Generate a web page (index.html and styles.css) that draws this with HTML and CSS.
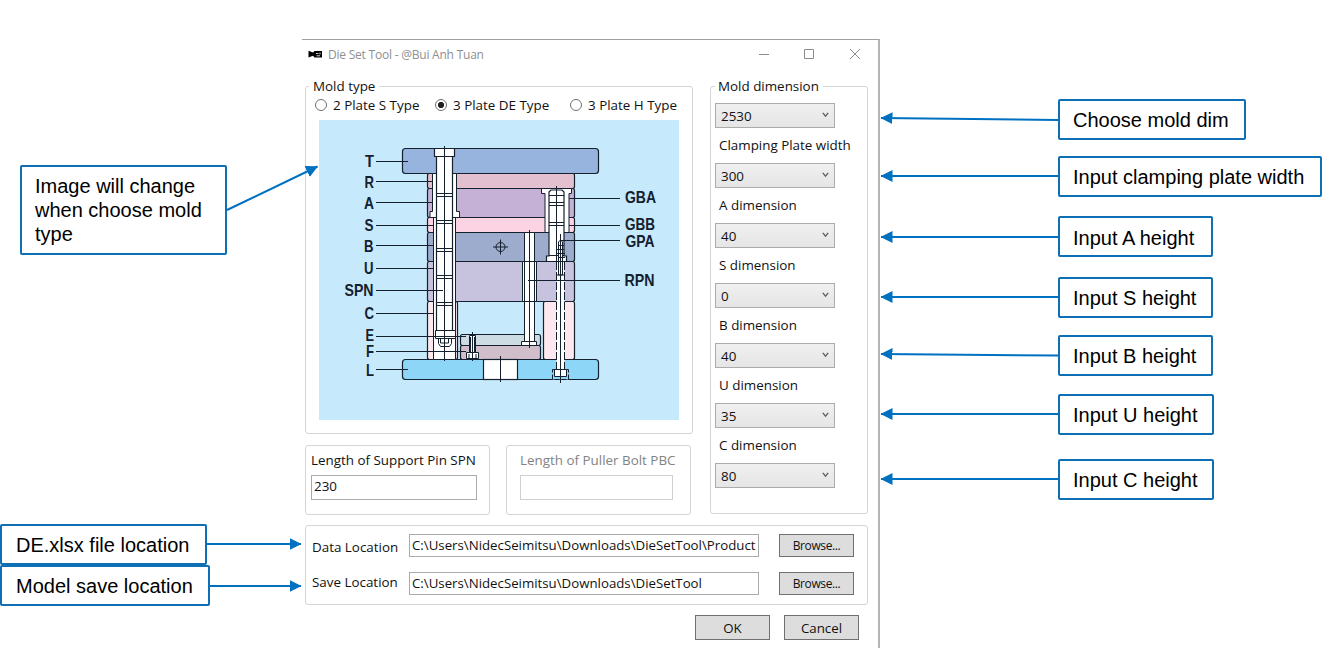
FILE: index.html
```html
<!DOCTYPE html>
<html lang="en">
<head>
<meta charset="utf-8">
<title>Die Set Tool</title>
<link rel="stylesheet" href="styles.css">
</head>
<body>
<main class="slide">
  <aside class="notes notes-left">
    <p class="note note-image">Image will change when choose mold type</p>
    <p class="note note-data">DE.xlsx file location</p>
    <p class="note note-save">Model save location</p>
  </aside>

  <section class="window">
    <header class="titlebar">
      <svg class="app-icon" width="14" height="9" viewBox="0 0 14 9"><path d="M.5.700L5 2.500l1.500-1.500H14v6.500H6.500L5 5.800.5 7.600z" fill="#000"/><path d="M8 3.500h2.500M8.500 5.800h3.500M12 2.500v2" stroke="#fff" fill="none" stroke-width=".8"/></svg>
      <h1 class="title">Die Set Tool - @Bui Anh Tuan</h1>
      <svg class="controls" width="102" height="12" viewBox="0 0 102 12" fill="none" stroke="#8c8c8c"><path d="M0 6.500h10M45.500 1.500h9v9h-9zM91 1l10 10M101 1L91 11"/></svg>
    </header>

    <div class="upper">
      <div class="left-col">
        <div class="group mold-type">
          <h2 class="legend">Mold type</h2>
          <div class="radios">
            <label class="radio r1"><i class="dot"></i><span>2 Plate S Type</span></label>
            <label class="radio r2"><i class="dot on"></i><span>3 Plate DE Type</span></label>
            <label class="radio r3"><i class="dot"></i><span>3 Plate H Type</span></label>
          </div>
          <svg class="diagram" width="360" height="300" viewBox="319 120 360 300">
            <rect x="319" y="120" width="360" height="300" fill="#c7e9fc"/>
            <g stroke="#14202e" stroke-width="1.2">
              <rect x="402.500" y="148.500" width="196" height="25" rx="3" fill="#96b4de"/>
              <rect x="427.500" y="173.500" width="147" height="15" rx="2" fill="#e2c0cf"/>
              <rect x="427.500" y="188.500" width="147" height="29" rx="2" fill="#c5b0d6"/>
              <rect x="427.500" y="217.500" width="147" height="15" rx="2" fill="#fbd3e2"/>
              <rect x="427.500" y="232.500" width="147" height="29" rx="2" fill="#9dabcd"/>
              <rect x="427.500" y="261.500" width="147" height="40" rx="2" fill="#c7c3df"/>
              <rect x="427.500" y="301.500" width="30" height="58" rx="2" fill="#fde8f0"/>
              <rect x="543.500" y="301.500" width="31" height="58" rx="2" fill="#fde8f0"/>
              <rect x="460.500" y="334.500" width="80" height="11" rx="2" fill="#cddbe3"/>
              <rect x="460.500" y="345.500" width="80" height="14" rx="2" fill="#d0bfca"/>
              <rect x="402.500" y="359.500" width="196" height="20" rx="3" fill="#8dd6f7"/>
              <rect x="483.500" y="359.500" width="34" height="20" fill="#fff"/>
            </g>
            <!-- support pin -->
            <g stroke="#14202e" fill="#fff">
              <path d="M433.500 217.500h22v142h-22z"/>
              <path d="M432.500 173.500h24v38h3v6h-29.500v-6h2.500z"/>
              <path d="M434.500 148.500h20v8h-2v174h-16v-174h-2z" stroke-width="1.200"/>
              <path d="M434.500 156.500h20M437 193.500h15M437 196.500h15M437 220.500h15M437 223.500h15M437 248.500h15M437 251.500h15M437 275.500h15M437 278.500h15M437 302.500h15M437 305.500h15"/>
              <path d="M438.500 338.500h13v5l-2 3h-9l-2-3zM435.500 330.500h20v8h-20zM440.500 339v4h8v-4"/>
              <path d="M457.500 301v58M444.500 146v215"/>
            </g>
            <!-- guide pin and bush -->
            <g stroke="#14202e" fill="#fff">
              <path d="M541.500 188.500h30v5h-2.500v39h-24v-39h-3.500z"/>
              <path d="M549 192l2-2h11l2 2v64h2.500v5.500h-20v-5.500h2.500z" stroke-width="1.200"/>
              <path d="M549 195.500h15M549 202.500h15M549 205.500h15M549 222.500h15M549 225.500h15M549 255.500h15"/>
              <path d="M556.500 262h8v108h-8z" stroke="none"/>
              <path d="M558.500 242l2-2 2 2v33h-4zM558 245.500h6M557 249.500h7M557 253.500h8M558 257.500h7M558 261.500h7"/>
              <path d="M556.500 262v108M564.500 262v108" stroke-dasharray="8 2"/>
              <path d="M552.500 369.500h16v10h-16z" fill="#8dd6f7" stroke-dasharray="5 2"/>
              <path d="M554.500 369.500h12v7h-12zM556.500 275h8M556.500 376.500h8M560.500 234v149M556.500 186v75"/>
            </g>
            <!-- return pin and ejector bolt -->
            <g stroke="#14202e" fill="#fff">
              <path d="M522.500 261.500h14v40h-14zM524.500 232.500h10v109h-10z"/>
              <path d="M521.500 341.500h15v4h-15zM529.500 230v118"/>
              <path d="M469.500 335.500h6v17h-6zM466.500 352.500h12v6h-12zM470.500 337v15M474.500 337v15M472.500 332v29M469 354v4M476 354v4M500.500 356v26"/>
            </g>
            <g stroke="#14202e" fill="none"><circle cx="500.500" cy="247" r="4.500"/><path d="M493 247h15M500.500 239.500v15"/></g>
            <path stroke="#14202e" fill="none" d="M376 161.500h32M376 181.500h57M376 202.500h57M376 225.500h57M376 245.500h57M376 268.500h57M376 290.500h67M376 313.500h57M376 336.500h90M376 351.500h90M376 369.500h32M569 198.500h51M569 225.500h51M561 240.500h59M528 280.500h92"/>
            <g class="part">
              <text x="365" y="167" textLength="9" lengthAdjust="spacingAndGlyphs">T</text>
              <text x="364.500" y="188" textLength="9.500" lengthAdjust="spacingAndGlyphs">R</text>
              <text x="364" y="209" textLength="10" lengthAdjust="spacingAndGlyphs">A</text>
              <text x="364.500" y="231" textLength="9" lengthAdjust="spacingAndGlyphs">S</text>
              <text x="364" y="252" textLength="9.500" lengthAdjust="spacingAndGlyphs">B</text>
              <text x="364" y="274" textLength="9.500" lengthAdjust="spacingAndGlyphs">U</text>
              <text x="344.500" y="296" textLength="29" lengthAdjust="spacingAndGlyphs">SPN</text>
              <text x="364.500" y="319" textLength="9.500" lengthAdjust="spacingAndGlyphs">C</text>
              <text x="365.500" y="341" textLength="8.500" lengthAdjust="spacingAndGlyphs">E</text>
              <text x="366" y="357" textLength="8" lengthAdjust="spacingAndGlyphs">F</text>
              <text x="366" y="376" textLength="8" lengthAdjust="spacingAndGlyphs">L</text>
              <text x="625" y="203" textLength="31" lengthAdjust="spacingAndGlyphs">GBA</text>
              <text x="625" y="230" textLength="30" lengthAdjust="spacingAndGlyphs">GBB</text>
              <text x="625.500" y="247" textLength="29" lengthAdjust="spacingAndGlyphs">GPA</text>
              <text x="624.500" y="286" textLength="30" lengthAdjust="spacingAndGlyphs">RPN</text>
            </g>
          </svg>
        </div>
        <div class="bolts">
          <div class="group bolt"><label>Length of Support Pin SPN</label><div class="box spn">230</div></div>
          <div class="group bolt off"><label>Length of Puller Bolt PBC</label><div class="box"></div></div>
        </div>
      </div>

      <div class="group dims">
        <h2 class="legend">Mold dimension</h2>
        <div class="combo">2530<svg width="7" height="6" viewBox="0 0 7 6"><path d="M.8.800l2.700 3.400L6.200.800"/></svg></div>
        <label>Clamping Plate width</label>
        <div class="combo">300<svg width="7" height="6" viewBox="0 0 7 6"><path d="M.8.800l2.700 3.400L6.200.800"/></svg></div>
        <label>A dimension</label>
        <div class="combo">40<svg width="7" height="6" viewBox="0 0 7 6"><path d="M.8.800l2.700 3.400L6.200.800"/></svg></div>
        <label>S dimension</label>
        <div class="combo">0<svg width="7" height="6" viewBox="0 0 7 6"><path d="M.8.800l2.700 3.400L6.200.800"/></svg></div>
        <label>B dimension</label>
        <div class="combo">40<svg width="7" height="6" viewBox="0 0 7 6"><path d="M.8.800l2.700 3.400L6.200.800"/></svg></div>
        <label>U dimension</label>
        <div class="combo">35<svg width="7" height="6" viewBox="0 0 7 6"><path d="M.8.800l2.700 3.400L6.200.800"/></svg></div>
        <label>C dimension</label>
        <div class="combo">80<svg width="7" height="6" viewBox="0 0 7 6"><path d="M.8.800l2.700 3.400L6.200.800"/></svg></div>
      </div>
    </div>

    <div class="group places">
      <label class="data-label">Data Location</label><div class="box path">C:\Users\NidecSeimitsu\Downloads\DieSetTool\Product</div><button class="btn browse">Browse...</button>
      <label>Save Location</label><div class="box path">C:\Users\NidecSeimitsu\Downloads\DieSetTool</div><button class="btn browse">Browse...</button>
    </div>
    <footer class="actions"><button class="btn">OK</button><button class="btn">Cancel</button></footer>
  </section>

  <aside class="notes notes-right">
    <p class="note n-mold">Choose mold dim</p>
    <p class="note n-clamp">Input clamping plate width</p>
    <p class="note n-a">Input A height</p>
    <p class="note n-s">Input S height</p>
    <p class="note n-b">Input B height</p>
    <p class="note n-u">Input U height</p>
    <p class="note n-c">Input C height</p>
  </aside>

  <svg class="arrows" width="1326" height="661" viewBox="0 0 1326 661">
    <defs><marker id="head" markerUnits="userSpaceOnUse" markerWidth="12" markerHeight="12" refX="11.500" refY="6" orient="auto"><path d="M0 0l12 6-12 6z" fill="#0070c0"/></marker></defs>
    <g stroke="#0070c0" stroke-width="2">
      <path marker-end="url(#head)" d="M227 210L317.500 166.500"/>
      <path marker-end="url(#head)" d="M207 544H301"/>
      <path marker-end="url(#head)" d="M210 586H301"/>
      <path marker-end="url(#head)" d="M1058 120L881 118"/>
      <path marker-end="url(#head)" d="M1058 176H881"/>
      <path marker-end="url(#head)" d="M1058 237H881"/>
      <path marker-end="url(#head)" d="M1058 297H881"/>
      <path marker-end="url(#head)" d="M1058 355.500L881 354"/>
      <path marker-end="url(#head)" d="M1058 414H881"/>
      <path marker-end="url(#head)" d="M1058 479H881"/>
    </g>
  </svg>
</main>
</body>
</html>
```

FILE: styles.css
```css
* { box-sizing: border-box; }
body { margin: 0; background: #fff; color: #111; font: 13.4px/18px "Open Sans", "Noto Sans", sans-serif; overflow: hidden; }
h1, h2, p { margin: 0; font-weight: normal; }
.slide { position: relative; display: grid; grid-template-columns: 302px 578px 446px; width: 1326px; height: 661px; }

/* callout boxes */
.notes { display: flex; flex-direction: column; align-items: flex-start; }
.note { height: 41px; border: 2px solid #0f6fb5; border-radius: 2px; padding: 7px 13px; background: #fff; color: #000; font: 20px/24px "Liberation Sans", Arial, sans-serif; white-space: nowrap; }
.note-image { width: 207px; height: 90px; margin: 165px 0 269px 20px; white-space: normal; }
.note-data { width: 207px; padding-left: 14px; }
.note-save { width: 210px; padding-left: 14px; }
.notes-right { padding: 99px 0 0 178px; }
.n-mold { width: 188px; }
.n-clamp { width: 264px; margin-top: 16px; }
.n-a { width: 155px; margin-top: 19px; padding-top: 8px; }
.n-s { width: 155px; margin-top: 20px; }
.n-b { width: 155px; margin-top: 17px; }
.n-u { width: 156px; margin-top: 18px; }
.n-c { width: 156px; margin-top: 24px; }
.arrows { position: absolute; left: 0; top: 0; pointer-events: none; }

/* dialog */
.window { margin-top: 39px; height: 609px; padding-left: 3px; border-top: 1px solid #a0a0a0; border-right: 2px solid #b4b4b4; }
.titlebar { display: flex; align-items: center; height: 46px; padding: 0 17px 16px 3px; }
.app-icon { margin: -1px 6px 0 0; }
.title { font-size: 12px; line-height: 18px; letter-spacing: -.22px; color: #8f8f8f; }
.controls { margin: -2px 0 0 auto; }
.upper { display: flex; gap: 17px; height: 429px; }
.left-col { display: flex; flex-direction: column; width: 388px; gap: 11px; }
.group { border: 1px solid #d5d5d5; border-radius: 3px; }
.legend { width: max-content; height: 18px; margin-top: -10px; padding: 0 4px; background: #fff; font-size: 13.4px; line-height: 18px; }
.mold-type { height: 348px; padding-left: 3px; }
.radios { display: flex; height: 18px; margin: 1px 0 6px 6px; }
.radio { display: flex; align-items: center; gap: 6px; white-space: nowrap; }
.r1 { width: 120px; }
.r2 { width: 135px; }
.dot { width: 12px; height: 12px; border: 1px solid #707070; border-radius: 50%; background: #fff; }
.on { background: radial-gradient(circle, #222 0 2.8px, #fff 3.4px); }
.diagram { display: block; margin-left: 10px; }
.part { font: bold 16.5px "Liberation Sans Narrow", "Liberation Sans", sans-serif; fill: #14202e; }
.bolts { display: flex; gap: 16px; }
.bolt { width: 185px; height: 70px; padding: 5px 12px 0 5px; white-space: nowrap; }
.bolt label { display: block; height: 24px; }
.box { height: 25px; border: 1px solid #ababab; background: #fff; padding: 1px 2px; }
.off { padding: 5px 17px 0 13px; color: #838383; }
.off .box { border-color: #d0d0d0; }
.dims { width: 158px; height: 428px; padding-left: 4px; }
.dims .legend { padding: 0 4px 0 3px; margin-bottom: 8px; }
.dims label { display: block; height: 35px; padding: 8px 0 0 4px; white-space: nowrap; }
.combo { display: flex; align-items: center; justify-content: space-between; width: 120px; height: 25px; padding: 1px 5px 0; border: 1px solid #acacac; background: linear-gradient(#f0f0f0, #e5e5e5); }
.combo svg { fill: none; stroke: #606060; stroke-width: 1.3; margin-top: -3px; }
.places { display: grid; grid-template-columns: 97px 350px 75px; row-gap: 15px; column-gap: 0; width: 563px; height: 80px; margin-top: 10px; padding: 8px 0 0 6px; align-content: start; }
.places label { line-height: 21px; white-space: nowrap; }
.places .data-label { line-height: 27px; height: 23px; }
.path { height: 23px; font-size: 13.25px; white-space: nowrap; overflow: hidden; }
.btn { width: 75px; height: 25px; border: 1px solid #707070; background: #ddd; padding: 0; color: #111; font: 13.3px/20px "Open Sans", "Noto Sans", sans-serif; }
.browse { height: 23px; margin-left: 20px; font-size: 12px; letter-spacing: -.4px; }
.actions { display: flex; gap: 14px; padding: 10px 0 0 390px; }
```
